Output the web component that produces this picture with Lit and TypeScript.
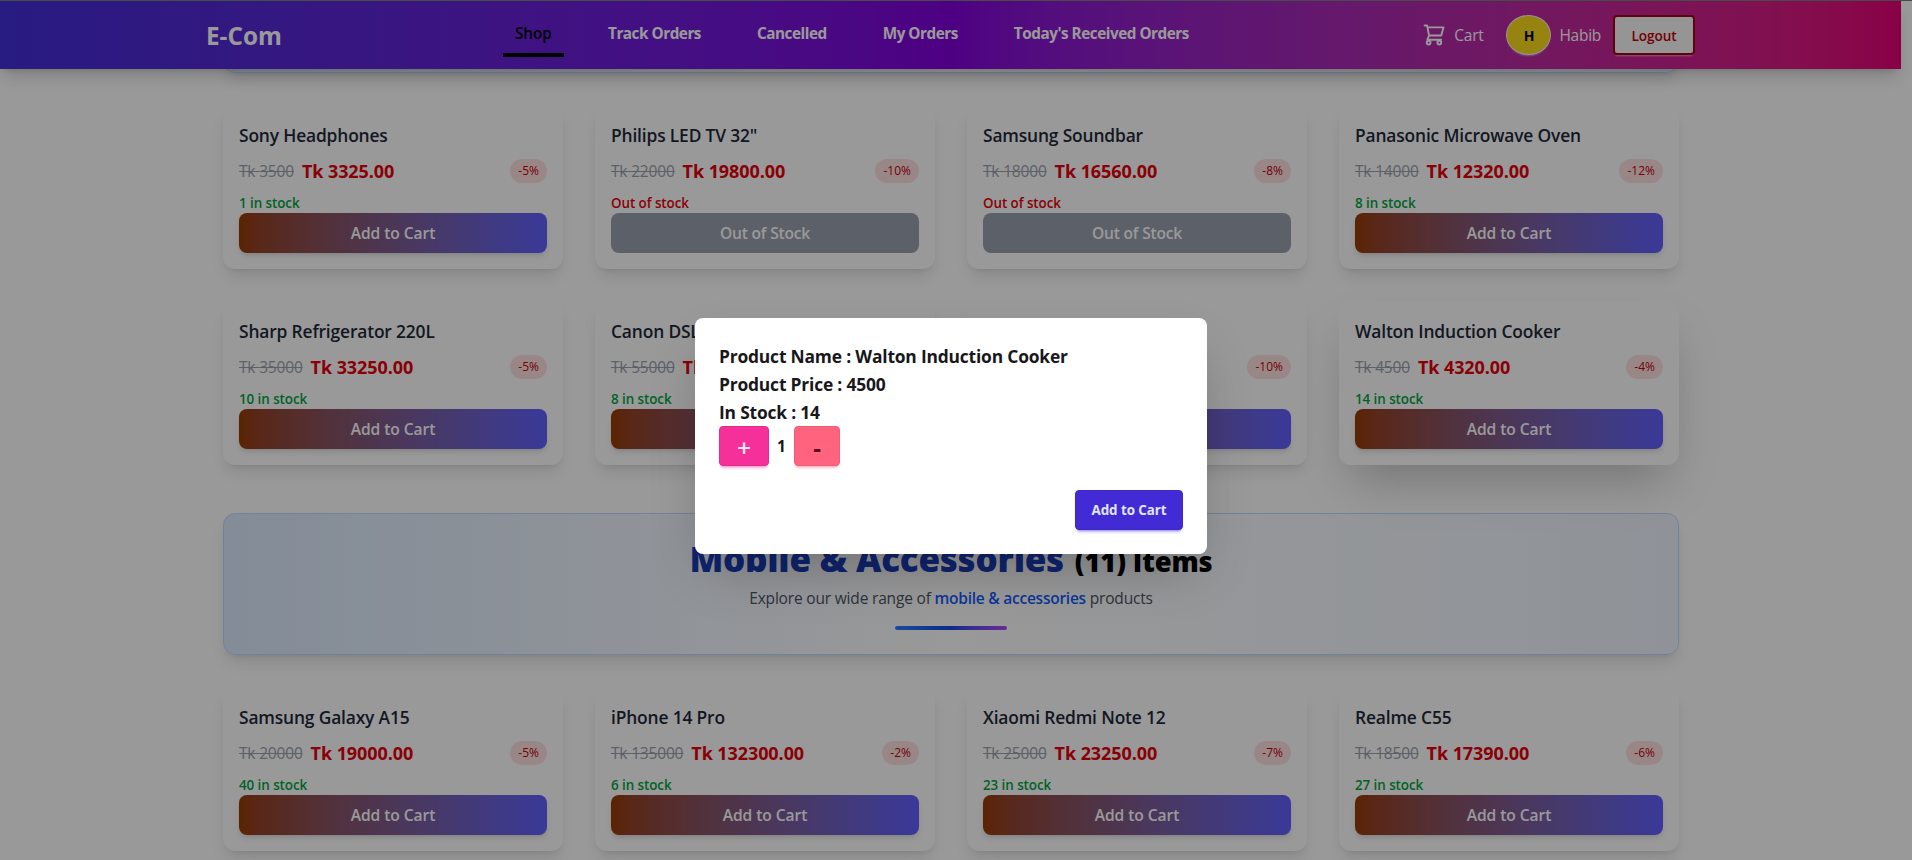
import { LitElement, html, css } from 'lit';
import { customElement, property } from 'lit/decorators.js';
import { classMap } from 'lit/directives/class-map.js';

interface Product {
  name: string;
  price: number;
  off: number;
  stock: number;
}

const home: Product[] = [
  { name: 'Sony Headphones', price: 3500, off: 5, stock: 1 },
  { name: 'Philips LED TV 32"', price: 22000, off: 10, stock: 0 },
  { name: 'Samsung Soundbar', price: 18000, off: 8, stock: 0 },
  { name: 'Panasonic Microwave Oven', price: 14000, off: 12, stock: 8 },
  { name: 'Sharp Refrigerator 220L', price: 35000, off: 5, stock: 10 },
  { name: 'Canon DSLR', price: 55000, off: 7, stock: 8 },
  { name: '', price: 20000, off: 10, stock: 12 },
  { name: 'Walton Induction Cooker', price: 4500, off: 4, stock: 14 },
];

const mobile: Product[] = [
  { name: 'Samsung Galaxy A15', price: 20000, off: 5, stock: 40 },
  { name: 'iPhone 14 Pro', price: 135000, off: 2, stock: 6 },
  { name: 'Xiaomi Redmi Note 12', price: 25000, off: 7, stock: 23 },
  { name: 'Realme C55', price: 18500, off: 6, stock: 27 },
];

const links = ['Shop', 'Track Orders', 'Cancelled', 'My Orders', "Today's Received Orders"];

@customElement('product-card')
class ProductCard extends LitElement {
  @property({ attribute: false }) product!: Product;
  @property({ type: Boolean }) raised = false;

  static styles = css`
    :host { display: block; }
    .card {
      box-sizing: border-box;
      height: 164px;
      padding: 16px;
      border-radius: 12px;
      background: #fff;
      box-shadow: 0 10px 15px -3px rgba(0, 0, 0, 0.1), 0 4px 6px -4px rgba(0, 0, 0, 0.1);
    }
    .raised { box-shadow: 0 25px 50px -12px rgba(0, 0, 0, 0.25); }
    .name {
      height: 28px;
      margin: 0 0 8px;
      font-size: 17.4px;
      font-weight: 600;
      line-height: 28px;
      letter-spacing: -0.16px;
      color: #1e2939;
    }
    .prices { display: flex; align-items: center; height: 28px; gap: 8px; }
    .old {
      font-size: 15.5px;
      letter-spacing: -0.18px;
      color: #99a1af;
      text-decoration: line-through;
    }
    .new { font-size: 18px; font-weight: 700; letter-spacing: -0.08px; color: #e7000b; }
    .off {
      margin-left: auto;
      padding: 4px 8px;
      border-radius: 12px;
      background: #ffe2e2;
      color: #c10007;
      font-size: 12px;
      font-weight: 500;
      line-height: 16px;
    }
    .stock {
      margin-top: 8px;
      font-size: 13.4px;
      font-weight: 600;
      line-height: 20px;
      letter-spacing: -0.06px;
      color: #00a63e;
    }
    .none { color: #e7000b; }
    .buy {
      display: block;
      width: 100%;
      height: 40px;
      padding: 0;
      border: 0;
      border-radius: 8px;
      background: linear-gradient(to right in oklab, #973c00, #615fff);
      box-shadow: 0 4px 6px -1px rgba(0, 0, 0, 0.1), 0 2px 4px -2px rgba(0, 0, 0, 0.1);
      font: 600 15.6px/24px 'Open Sans', sans-serif;
      letter-spacing: -0.08px;
      color: #fff;
    }
    .sold { background: #99a1af; box-shadow: none; letter-spacing: -0.2px; }
  `;

  render() {
    const p = this.product;
    const sold = p.stock === 0;
    return html`
      <div class=${classMap({ card: true, raised: this.raised })}>
        <h3 class="name">${p.name}</h3>
        <div class="prices">
          <span class="old">Tk ${p.price}</span>
          <span class="new">Tk ${(p.price * (1 - p.off / 100)).toFixed(2)}</span>
          <span class="off">-${p.off}%</span>
        </div>
        <div class=${classMap({ stock: true, none: sold })}>${sold ? 'Out of stock' : `${p.stock} in stock`}</div>
        <button class=${classMap({ buy: true, sold })}>${sold ? 'Out of Stock' : 'Add to Cart'}</button>
      </div>
    `;
  }
}

@customElement('app-root')
class AppRoot extends LitElement {
  static styles = css`
    :host {
      display: block;
      position: relative;
      height: 860px;
      overflow: hidden;
      background: #fff;
      font-family: 'Open Sans', sans-serif;
    }
    .page { width: 1901px; }
    .edge { width: 1912px; height: 1px; background: #74807c; }
    .nav {
      position: relative;
      z-index: 1;
      box-sizing: border-box;
      height: 68px;
      padding: 0 206px;
      display: flex;
      align-items: center;
      background: linear-gradient(to right in oklab, #432dd7, #8200db, #e60076);
      box-shadow: 0 10px 15px -3px rgba(0, 0, 0, 0.16), 0 4px 6px -4px rgba(0, 0, 0, 0.16);
      color: #fff;
    }
    .brand { width: 297px; box-sizing: border-box; font-size: 24.3px; font-weight: 700; }
    .links { display: flex; align-self: stretch; }
    .link {
      box-sizing: border-box;
      height: 56px;
      margin-right: 32px;
      padding: 20px 12px 0;
      font-size: 15.3px;
      font-weight: 700;
      line-height: 24px;
      letter-spacing: -0.48px;
      white-space: nowrap;
    }
    .active {
      width: 61px;
      border-bottom: 4px solid #000;
      color: #000;
      font-weight: 600;
      letter-spacing: -0.1px;
    }
    .user { display: flex; align-items: center; margin-left: auto; font-size: 15.5px; letter-spacing: -0.28px; }
    .cart { display: flex; align-items: center; gap: 9px; margin-right: 23px; }
    .icon { width: 22px; height: 22px; }
    .avatar {
      box-sizing: border-box;
      width: 45px;
      height: 40px;
      margin-right: 8px;
      border: 1px solid #f3f4f6;
      border-radius: 50%;
      background: #fcdb1c;
      box-shadow: 0 3px 2px -2px rgba(255, 255, 255, 0.5);
      font-size: 14px;
      font-weight: 700;
      line-height: 40px;
      text-align: center;
      color: #000;
    }
    .logout {
      box-sizing: border-box;
      width: 82px;
      height: 40px;
      margin-left: 12px;
      border: 2px solid #9f0712;
      border-radius: 4px;
      background: #f8f8f8;
      box-shadow: 0 3px 2px -2px rgba(255, 255, 255, 0.5);
      font-size: 13.6px;
      font-weight: 600;
      line-height: 38px;
      letter-spacing: -0.1px;
      text-align: center;
      color: #c10007;
    }
    .main { width: 1456px; margin-left: 223px; }
    .banner {
      box-sizing: border-box;
      border: 1px solid #bedbff;
      border-radius: 12px;
      background: linear-gradient(to right in oklab, #dbeafe, #fff, #eff6ff);
      box-shadow: 0 10px 15px -3px rgba(0, 0, 0, 0.1), 0 4px 6px -4px rgba(0, 0, 0, 0.1);
    }
    .tail { height: 24px; margin-top: -20px; }
    .grid { display: grid; grid-template-columns: repeat(4, 340px); gap: 32px; margin-top: 32px; }
    .section { height: 142px; margin-top: 48px; padding: 24px; text-align: center; }
    .title {
      height: 40px;
      margin: 0;
      font-size: 35px;
      font-weight: 800;
      line-height: 42px;
      letter-spacing: -0.27px;
      color: #193cb8;
    }
    .count { margin-left: 2px; font-size: 27.3px; line-height: 1; letter-spacing: -0.12px; color: #000; }
    .sub { margin: 8px 0 0; font-size: 15.5px; line-height: 24px; letter-spacing: -0.18px; color: #4a5565; }
    .hot { font-weight: 600; letter-spacing: -0.25px; color: #155dfc; }
    .bar {
      width: 112px;
      height: 4px;
      margin: 16px auto 0;
      border-radius: 4px;
      background: linear-gradient(to right in oklab, #2b7fff, #1447e6, #ad46ff);
    }
    .overlay {
      position: absolute;
      inset: 0;
      z-index: 2;
      display: flex;
      align-items: center;
      justify-content: center;
      padding: 12px 10px 0 0;
      background: rgba(0, 0, 0, 0.4);
    }
    .modal {
      box-sizing: border-box;
      width: 512px;
      height: 236px;
      padding: 24px;
      border-radius: 8px;
      background: #fff;
      box-shadow: 0 25px 50px -12px rgba(0, 0, 0, 0.25);
      color: #18181b;
    }
    .line { font-size: 17.4px; font-weight: 700; line-height: 28px; letter-spacing: -0.18px; }
    .qty { display: flex; align-items: center; }
    .step {
      box-sizing: border-box;
      width: 50px;
      height: 40px;
      border: 1px solid #e72a8b;
      border-radius: 4px;
      background: #f6309a;
      box-shadow: 0 3px 2px -2px rgba(246, 48, 154, 0.3), 0 4px 3px -2px rgba(246, 48, 154, 0.3);
      font-size: 24px;
      font-weight: 600;
      line-height: 42px;
      text-align: center;
      color: #fdeaf4;
    }
    .minus {
      width: 46px;
      border-color: #f25c77;
      background: #ff637e;
      box-shadow: 0 3px 2px -2px rgba(255, 99, 126, 0.3), 0 4px 3px -2px rgba(255, 99, 126, 0.3);
      font-weight: 700;
      color: #4d0218;
    }
    .num { width: 25px; font-size: 15.5px; font-weight: 700; text-align: center; }
    .actions { display: flex; justify-content: flex-end; margin-top: 24px; }
    .add {
      box-sizing: border-box;
      width: 108px;
      height: 40px;
      border: 1px solid #3e28c8;
      border-radius: 4px;
      background: #422ad5;
      box-shadow: 0 3px 2px -2px rgba(66, 42, 213, 0.3), 0 4px 3px -2px rgba(66, 42, 213, 0.3);
      font-size: 13.4px;
      font-weight: 700;
      line-height: 38px;
      letter-spacing: -0.07px;
      text-align: center;
      color: #e0e7ff;
    }
  `;

  render() {
    return html`
      <div class="edge"></div>
      <div class="page">
        <nav class="nav">
          <div class="brand">E-Com</div>
          <div class="links">
            ${links.map((l, i) => html`<span class=${classMap({ link: true, active: i === 0 })}>${l}</span>`)}
          </div>
          <div class="user">
            <span class="cart">
              <svg class="icon" viewBox="0 0 22 22" fill="none" stroke="#fff" stroke-width="1.9" stroke-linejoin="round" stroke-linecap="round">
                <path d="M1.6 1.5h2.5l2 10.2M4.5 3.4h16l-2.3 8.1H6.1l-1.7 4.2h13.8" />
                <circle cx="5.6" cy="18.6" r="1.9" />
                <circle cx="16.3" cy="18.6" r="1.9" />
              </svg>
              Cart
            </span>
            <span class="avatar">H</span>
            <span>Habib</span>
            <span class="logout">Logout</span>
          </div>
        </nav>
        <main class="main">
          <div class="banner tail"></div>
          <div class="grid">
            ${home.map((p) => html`<product-card .product=${p} ?raised=${p.name.startsWith('Walton')}></product-card>`)}
          </div>
          <section class="banner section">
            <h2 class="title">Mobile &amp; Accessories <span class="count">(11) Items</span></h2>
            <p class="sub">Explore our wide range of <span class="hot">mobile &amp; accessories</span> products</p>
            <div class="bar"></div>
          </section>
          <div class="grid">${mobile.map((p) => html`<product-card .product=${p}></product-card>`)}</div>
        </main>
      </div>
      <div class="overlay">
        <div class="modal">
          <div class="line">Product Name : Walton Induction Cooker</div>
          <div class="line">Product Price : 4500</div>
          <div class="line">In Stock : 14</div>
          <div class="qty">
            <div class="step">+</div>
            <span class="num">1</span>
            <div class="step minus">-</div>
          </div>
          <div class="actions"><div class="add">Add to Cart</div></div>
        </div>
      </div>
    `;
  }
}
